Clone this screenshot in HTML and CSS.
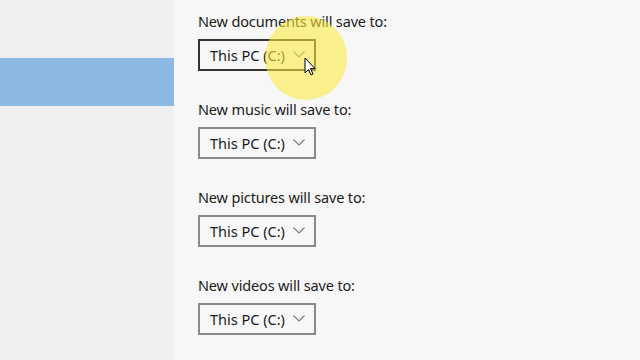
FILE: index.html
```html
<!DOCTYPE html>
<html>
<head>
<meta charset="utf-8">
<link rel="stylesheet" href="styles.css">
</head>
<body>
<div class="app">
  <aside class="sidebar">
    <div class="selected"></div>
  </aside>
  <main class="content">
    <div class="group">
      <div class="label">New documents will save to:</div>
      <div class="select focused">This PC (C:)<svg class="chev" viewBox="0 0 12 7"><path d="M0.5 0.5 L6 6 L11.5 0.5" fill="none" stroke="#777" stroke-width="1.1"/></svg></div>
    </div>
    <div class="group">
      <div class="label">New music will save to:</div>
      <div class="select">This PC (C:)<svg class="chev" viewBox="0 0 12 7"><path d="M0.5 0.5 L6 6 L11.5 0.5" fill="none" stroke="#777" stroke-width="1.1"/></svg></div>
    </div>
    <div class="group">
      <div class="label">New pictures will save to:</div>
      <div class="select">This PC (C:)<svg class="chev" viewBox="0 0 12 7"><path d="M0.5 0.5 L6 6 L11.5 0.5" fill="none" stroke="#777" stroke-width="1.1"/></svg></div>
    </div>
    <div class="group">
      <div class="label">New videos will save to:</div>
      <div class="select">This PC (C:)<svg class="chev" viewBox="0 0 12 7"><path d="M0.5 0.5 L6 6 L11.5 0.5" fill="none" stroke="#777" stroke-width="1.1"/></svg></div>
    </div>
  </main>
</div>
<div class="highlight"></div>
<svg class="cursor" viewBox="0 0 12 19" width="12" height="19"><path d="M1 1 L1 16 L4.5 12.5 L7 18 L9 17 L6.6 11.6 L11 11.6 Z" fill="#fff" stroke="#000" stroke-width="1" stroke-linejoin="round"/></svg>
</body>
</html>
```
FILE: styles.css
```css
html, body {
  margin: 0;
  padding: 0;
  width: 640px;
  height: 360px;
  overflow: hidden;
  font-family: "Noto Sans", "Open Sans", sans-serif;
}
.app {
  display: flex;
  width: 640px;
  height: 360px;
}
.sidebar {
  width: 174px;
  background: #efefef;
  padding-top: 58px;
  box-sizing: border-box;
}
.selected {
  height: 48px;
  background: #8bb9e1;
}
.content {
  flex: 1;
  background: #f7f7f7;
  padding: 11px 0 0 24px;
  display: flex;
  flex-direction: column;
  gap: 28px;
}
.group {
  display: flex;
  flex-direction: column;
  gap: 8px;
}
.label {
  font-size: 14.5px;
  line-height: 20px;
  letter-spacing: -0.15px;
  color: #1b1b1b;
}
.select {
  box-sizing: border-box;
  width: 118px;
  height: 32px;
  border: 2px solid #8a8a8a;
  display: flex;
  align-items: center;
  padding-left: 10px;
  padding-bottom: 1px;
  font-size: 14.5px;
  color: #1b1b1b;
}
.select.focused {
  border-color: #333;
}
.chev {
  width: 12px;
  height: 7px;
  margin-left: auto;
  margin-right: 9px;
}
.highlight {
  position: absolute;
  left: 265px;
  top: 16px;
  width: 82px;
  height: 84px;
  border-radius: 50%;
  background: rgba(250, 235, 60, 0.58);
}
.cursor {
  position: absolute;
  left: 304px;
  top: 57px;
}
```
